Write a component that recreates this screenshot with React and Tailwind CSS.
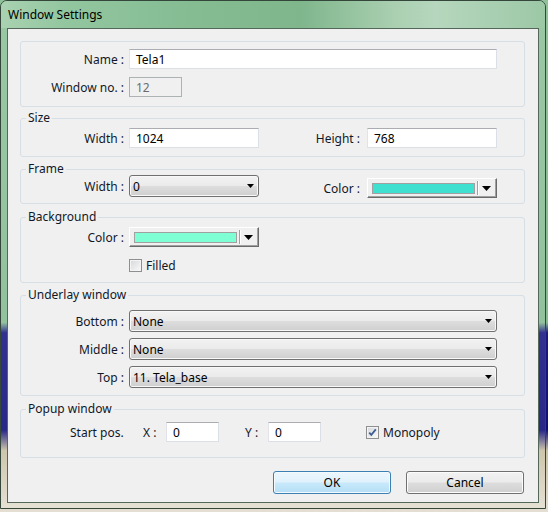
import React from 'react';

// Win7 style "Window Settings" dialog

function GroupBox({ title, className, children }) {
  return (
    <div className={`relative ml-[12px] w-[505px] rounded-[3px] border border-[#d5dfe5] ${className}`}>
      {title && (
        <span className="absolute -top-[9px] left-[5px] px-[2px] bg-[#f0f0f0] leading-[16px] text-[#101828]">
          {title}
        </span>
      )}
      {children}
    </div>
  );
}

function Label({ children, className }) {
  return <span className={`shrink-0 text-right leading-[16px] pt-[2px] text-[#101828] ${className}`}>{children}</span>;
}

function TextBox({ value, className, disabled }) {
  return (
    <div
      className={`h-[20px] shrink-0 flex items-center pl-[6px] pt-[2px] border ${
        disabled
          ? 'bg-[#f0f0f0] text-[#6d6d6d] border-[#adb2b5]'
          : 'bg-white text-black border-[#dbdfe6] border-t-[#abadb3] border-l-[#e2e3ea]'
      } ${className}`}
    >
      {value}
    </div>
  );
}

function Combo({ value, className }) {
  return (
    <div
      className={`h-[22px] shrink-0 flex items-center pl-[3px] pr-[4px] rounded-[3px] border border-[#707070] shadow-[inset_0_0_0_1px_#f8f8f8] bg-[linear-gradient(to_bottom,#f2f2f2_0%,#ebebeb_48%,#dddddd_52%,#cfcfcf_100%)] text-black ${className}`}
    >
      <span className="flex-1 pt-[1px]">{value}</span>
      <svg width="7" height="4" viewBox="0 0 7 4">
        <path d="M0 0h7L3.5 4z" fill="#000" />
      </svg>
    </div>
  );
}

function ColorPicker({ swatch, className }) {
  return (
    <div
      className={`h-[20px] shrink-0 flex items-center pl-[4px] pr-[5px] bg-[#f0f0f0] border border-t-[#ffffff] border-l-[#ffffff] border-r-[#6a6a6a] border-b-[#6a6a6a] shadow-[inset_-1px_-1px_0_#a0a0a0] ${className}`}
    >
      <div className={`flex-1 h-[11px] border border-[#a0a0a0] ${swatch}`} />
      <div className="ml-[2px] h-[14px] w-[2px] border-l border-l-[#a0a0a0] border-r border-r-white" />
      <svg className="ml-[3px]" width="9" height="5" viewBox="0 0 9 5">
        <path d="M0 0h9L4.5 5z" fill="#000" />
      </svg>
    </div>
  );
}

function CheckBox({ checked }) {
  return (
    <div className="w-[13px] h-[13px] shrink-0 border border-[#8f8f8f] bg-[#f4f4f4] p-[1px]">
      <div className="w-full h-full bg-[linear-gradient(135deg,#d8dadd,#f7f7f7)] flex items-center justify-center">
        {checked && (
          <svg width="9" height="9" viewBox="0 0 9 9">
            <path d="M1.2 4.6l2.1 2.3L7.8 1.4" fill="none" stroke="#3f5d95" strokeWidth="1.8" />
          </svg>
        )}
      </div>
    </div>
  );
}

export default function App() {
  return (
    <div className="w-[548px] h-[512px] overflow-hidden bg-[linear-gradient(to_bottom,#8fc29a_0%,#86ba92_63%,#1b1a82_65%,#10107a_84%,#c8bfa3_88%,#e4dfd2_100%)] font-['Noto_Sans',sans-serif] text-[12px]">
      <div className="w-[546px] h-[509px] flex flex-col rounded-t-[7px] border border-[#35473b] bg-white/10">
        {/* title bar */}
        <div className="h-[27px] shrink-0 flex items-center pl-[7px] pt-[1px] rounded-t-[6px] bg-[linear-gradient(to_right,#a9d2b1_0%,#92c69f_12%,#85bc92_35%,#7fb68c_55%,#a9cfb0_72%,#b6d7bd_80%,#9cc8a6_100%)] text-black">
          Window Settings
        </div>

        {/* client area */}
        <div className="ml-[6px] w-[532px] h-[475px] shrink-0 border border-[#54675a] bg-[#f0f0f0] flex flex-col">
          <GroupBox className="mt-[12px] h-[66px] shrink-0">
            <div className="mt-[7px] flex items-center">
              <Label className="w-[103px]">Name :</Label>
              <TextBox value="Tela1" className="ml-[5px] w-[368px]" />
            </div>
            <div className="mt-[8px] flex items-center">
              <Label className="w-[103px]">Window no. :</Label>
              <TextBox value="12" disabled className="ml-[5px] w-[53px]" />
            </div>
          </GroupBox>

          <GroupBox title="Size" className="mt-[11px] h-[39px] shrink-0">
            <div className="mt-[9px] flex items-center">
              <Label className="w-[103px]">Width :</Label>
              <TextBox value="1024" className="ml-[5px] w-[130px]" />
              <Label className="w-[101px]">Height :</Label>
              <TextBox value="768" className="ml-[7px] w-[130px]" />
            </div>
          </GroupBox>

          <GroupBox title="Frame" className="mt-[12px] h-[35px] shrink-0">
            <div className="mt-[5px] flex items-start">
              <Label className="w-[103px] mt-[2px]">Width :</Label>
              <Combo value="0" className="ml-[5px] w-[130px]" />
              <Label className="w-[101px] mt-[4px]">Color :</Label>
              <ColorPicker swatch="bg-[#40e0d0]" className="ml-[7px] w-[130px] mt-[3px]" />
            </div>
          </GroupBox>

          <GroupBox title="Background" className="mt-[13px] h-[66px] shrink-0">
            <div className="mt-[9px] flex items-center">
              <Label className="w-[103px]">Color :</Label>
              <ColorPicker swatch="bg-[#7fffd4]" className="ml-[5px] w-[130px]" />
            </div>
            <div className="mt-[11px] ml-[108px] flex items-center">
              <CheckBox />
              <span className="ml-[4px] leading-[13px] pt-[1px] text-[#101828]">Filled</span>
            </div>
          </GroupBox>

          <GroupBox title="Underlay window" className="mt-[12px] h-[101px] shrink-0">
            <div className="mt-[14px] flex flex-col gap-[6px]">
              {[
                ['Bottom :', 'None'],
                ['Middle :', 'None'],
                ['Top :', '11. Tela_base'],
              ].map(([label, value]) => (
                <div key={label} className="flex items-center">
                  <Label className="w-[103px]">{label}</Label>
                  <Combo value={value} className="ml-[5px] w-[368px]" />
                </div>
              ))}
            </div>
          </GroupBox>

          <GroupBox title="Popup window" className="mt-[13px] h-[49px] shrink-0">
            <div className="mt-[12px] flex items-center">
              <span className="ml-[49px] w-[73px] leading-[16px] pt-[2px] text-[#101828]">Start pos.</span>
              <span className="w-[23px] leading-[16px] pt-[2px] text-[#101828]">X :</span>
              <TextBox value="0" className="w-[53px]" />
              <span className="ml-[26px] w-[23px] leading-[16px] pt-[2px] text-[#101828]">Y :</span>
              <TextBox value="0" className="w-[53px]" />
              <div className="ml-[45px]">
                <CheckBox checked />
              </div>
              <span className="ml-[4px] leading-[16px] pt-[2px] text-[#101828]">Monopoly</span>
            </div>
          </GroupBox>

          <div className="mt-[13px] mr-[14px] flex justify-end gap-[15px]">
            <button className="w-[118px] h-[23px] pt-[1px] rounded-[3px] border border-[#3c7fb1] shadow-[inset_0_0_0_1px_#f4fbff] bg-[linear-gradient(to_bottom,#ecf7fd_0%,#e0f2fc_48%,#c9e9fb_52%,#b4def5_100%)] text-black">
              OK
            </button>
            <button className="w-[118px] h-[23px] pt-[1px] rounded-[3px] border border-[#707070] shadow-[inset_0_0_0_1px_#fcfcfc] bg-[linear-gradient(to_bottom,#f2f2f2_0%,#ebebeb_48%,#dddddd_52%,#cfcfcf_100%)] text-black">
              Cancel
            </button>
          </div>
        </div>
      </div>
    </div>
  );
}
